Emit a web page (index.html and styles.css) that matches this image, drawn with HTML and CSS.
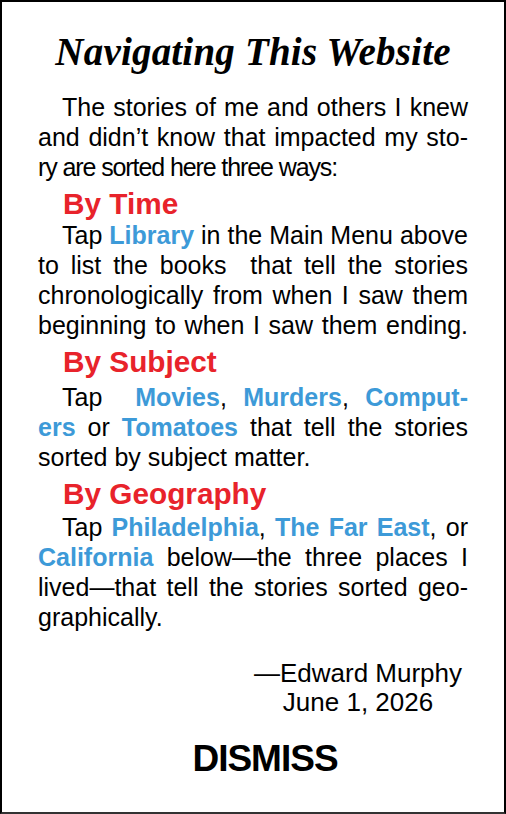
FILE: index.html
```html
<!DOCTYPE html>
<html lang="en">
<head>
<meta charset="utf-8">
<title>Navigating This Website</title>
<link rel="stylesheet" href="styles.css">
</head>
<body>
<div class="card">
  <h1 class="title">Navigating This Website</h1>

  <div class="para intro">
    <div class="ln j first">The stories of me and others I knew</div>
    <div class="ln j">and didn’t know that impacted my sto-</div>
    <div class="ln tight">ry are sorted here three ways:</div>
  </div>

  <h2 class="head">By Time</h2>
  <div class="para">
    <div class="ln j first">Tap <b class="lk">Library</b> in the Main Menu above</div>
    <div class="ln j">to list the books&nbsp; that tell the stories</div>
    <div class="ln j">chronologically from when I saw them</div>
    <div class="ln j">beginning to when I saw them ending.</div>
  </div>

  <h2 class="head">By Subject</h2>
  <div class="para subj">
    <div class="ln j first">Tap&nbsp; <b class="lk">Movies</b>, <b class="lk">Murders</b>, <b class="lk">Comput-</b></div>
    <div class="ln j"><b class="lk">ers</b> or <b class="lk">Tomatoes</b> that tell the stories</div>
    <div class="ln">sorted by subject matter.</div>
  </div>

  <h2 class="head">By Geography</h2>
  <div class="para geo">
    <div class="ln j first">Tap <b class="lk">Philadelphia</b>, <b class="lk">The Far East</b>, or</div>
    <div class="ln j"><b class="lk">California</b> below—the three places I</div>
    <div class="ln j">lived—that tell the stories sorted geo-</div>
    <div class="ln">graphically.</div>
  </div>

  <div class="sig">
    <div>—Edward Murphy</div>
    <div>June 1, 2026</div>
  </div>

  <div class="dismiss">DISMISS</div>
</div>
</body>
</html>
```

FILE: styles.css
```css
html, body {
  margin: 0;
  padding: 0;
  background: #fff;
}

.card {
  box-sizing: border-box;
  width: 506px;
  height: 814px;
  border: 2px solid #000;
  border-bottom-color: #333;
  padding: 27px 36px 0 36px;
  font-family: "Liberation Sans", Arial, sans-serif;
  color: #000;
}

.title {
  margin: 0;
  font-family: "Liberation Serif", "Times New Roman", serif;
  font-style: italic;
  font-weight: bold;
  font-size: 39px;
  letter-spacing: 0.2px;
  line-height: 46px;
  text-align: center;
}

.para {
  font-size: 25px;
  line-height: 30px;
}

.para.intro {
  margin-top: 17px;
}

.para.subj {
  margin-top: 4px;
}

.para.geo {
  margin-top: 2px;
}

.ln {
  text-align: left;
}

.ln.j {
  text-align: justify;
  text-align-last: justify;
}

.ln.first {
  text-indent: 24px;
}

.ln.tight {
  letter-spacing: -1.1px;
}

.lk {
  color: #3d9ad8;
  font-weight: bold;
}

.head {
  margin: 6px 0 0 0;
  padding-left: 25px;
  color: #e8232b;
  font-weight: bold;
  font-size: 29.75px;
  line-height: 32px;
}

.sig {
  margin: 27px 0 0 auto;
  width: 220px;
  text-align: center;
  font-size: 26px;
  line-height: 29px;
}

.dismiss {
  margin-top: 22px;
  padding-left: 24px;
  text-align: center;
  font-weight: bold;
  font-size: 37px;
  letter-spacing: -1px;
  line-height: 40px;
}
```
